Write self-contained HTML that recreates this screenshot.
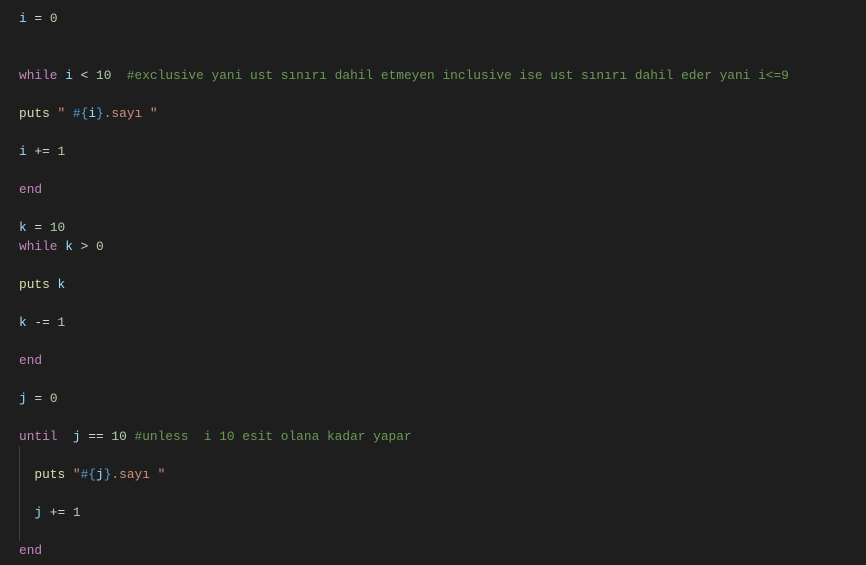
<!DOCTYPE html>
<html><head><meta charset="utf-8"><style>
html,body{margin:0;padding:0;background:#1e1e1e;width:866px;height:565px;overflow:hidden}
pre{margin:0;position:absolute;left:19px;top:9px;font-family:"Liberation Mono",monospace;font-size:12.83px;line-height:19px;color:#d4d4d4;white-space:pre}
.k{color:#c586c0}.v{color:#9cdcfe}.n{color:#b5cea8}.c{color:#6a9955}.s{color:#ce9178}.f{color:#dcdcaa}.b{color:#569cd6}
.g{position:absolute;left:19px;top:446px;width:1px;height:95px;background:#404040}
</style></head><body>
<div class="g"></div>
<pre><span class="v">i</span> = <span class="n">0</span>


<span class="k">while</span> <span class="v">i</span> &lt; <span class="n">10</span>  <span class="c">#exclusive yani ust sınırı dahil etmeyen inclusive ise ust sınırı dahil eder yani i&lt;=9</span>

<span class="f">puts</span> <span class="s">" </span><span class="b">#{</span><span class="v">i</span><span class="b">}</span><span class="s">.sayı "</span>

<span class="v">i</span> += <span class="n">1</span>

<span class="k">end</span>

<span class="v">k</span> = <span class="n">10</span>
<span class="k">while</span> <span class="v">k</span> &gt; <span class="n">0</span>

<span class="f">puts</span> <span class="v">k</span>

<span class="v">k</span> -= <span class="n">1</span>

<span class="k">end</span>

<span class="v">j</span> = <span class="n">0</span>

<span class="k">until</span>  <span class="v">j</span> == <span class="n">10</span> <span class="c">#unless  i 10 esit olana kadar yapar</span>

  <span class="f">puts</span> <span class="s">"</span><span class="b">#{</span><span class="v">j</span><span class="b">}</span><span class="s">.sayı "</span>

  <span class="v">j</span> += <span class="n">1</span>

<span class="k">end</span></pre>
</body></html>
